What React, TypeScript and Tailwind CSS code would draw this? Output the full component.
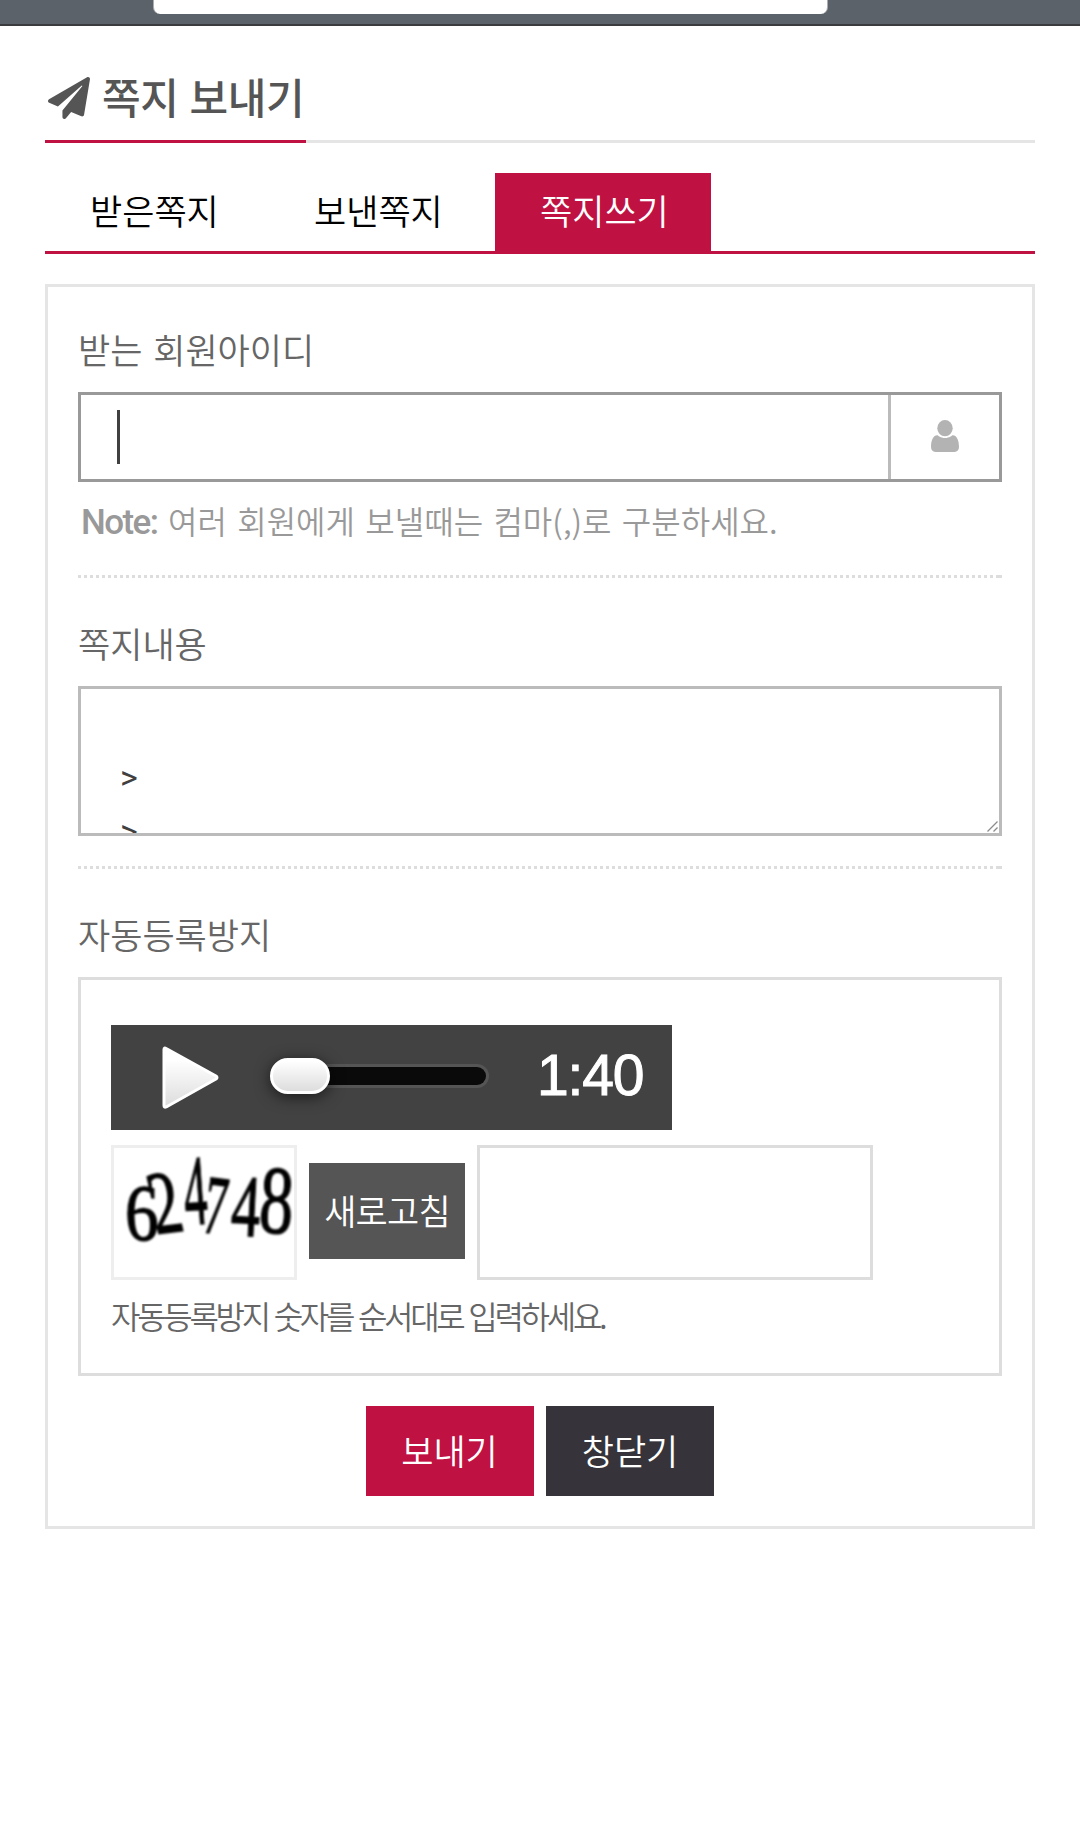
import React from 'react';
import { FaPaperPlane } from 'react-icons/fa';

const tabs = [
  { label: '받은쪽지', width: 'w-[217px]', pad: 'pl-[45px]', active: false },
  { label: '보낸쪽지', width: 'w-[233px]', pad: 'pl-[52px]', active: false },
  { label: '쪽지쓰기', width: 'w-[216px]', pad: 'pl-[45px]', active: true },
];

const captchaDigits = [
  { char: '6', transform: 'translate(11 91) rotate(3) skewX(3) scale(0.84 1)', size: 80 },
  { char: '2', transform: 'translate(42 86) rotate(-7) skewX(6) scale(0.68 1)', size: 90 },
  { char: '4', transform: 'translate(72 77) rotate(-4) scale(0.46 1)', size: 100 },
  { char: '7', transform: 'translate(87 84) rotate(7) scale(0.55 1)', size: 84 },
  { char: '4', transform: 'translate(116 87) rotate(3) scale(0.66 1)', size: 88 },
  { char: '8', transform: 'translate(144 84) rotate(3) scale(0.7 1)', size: 97 },
];

const UserIcon = () => (
  <svg width="28" height="32" viewBox="0 0 28 32" fill="#b3b3b3">
    <ellipse cx="14" cy="8.2" rx="7.7" ry="8.1" />
    <path d="M6.2 15.2C1.8 15.2 0 21 0 26.8C0 30 1.7 32 4.5 32H23.5C26.3 32 28 30 28 26.8C28 21 26.2 15.2 21.8 15.2C20.8 15.2 18.5 18 14 18C9.500 18 7.200 15.200 6.200 15.200Z" />
  </svg>
);

const PlayIcon = () => (
  <svg width="57" height="64" viewBox="0 0 57 64">
    <defs>
      <linearGradient id="play" x1="0" y1="0" x2="0" y2="1">
        <stop offset="0.2" stopColor="#ffffff" />
        <stop offset="1" stopColor="#dcdcdc" />
      </linearGradient>
    </defs>
    <path
      d="M2 3.500Q2 1.200 4.200 2.500L54 30Q56 31.500 54 33L4.200 61Q2 62 2 59.500Z"
      fill="url(#play)"
      stroke="#ffffff"
      strokeWidth="3"
      strokeLinejoin="round"
    />
  </svg>
);

const DottedLine = () => (
  <div className="flex h-[3px]">
    <div className="flex-1 bg-[repeating-linear-gradient(90deg,#dddddd_0px,#dddddd_3px,transparent_3px,transparent_6px)]" />
    <div className="w-[6px] bg-[#dddddd]" />
  </div>
);

const FieldLabel = ({ children }: { children: React.ReactNode }) => (
  <div className="h-[54px] text-[35px] leading-[52px] text-[#666666] whitespace-pre [word-spacing:3px]">{children}</div>
);

const AudioPlayer = () => (
  <div className="flex h-[105px] w-[561px] items-center bg-[#424242]">
    <div className="ml-[51px] mt-[1px]">
      <PlayIcon />
    </div>
    <div className="relative ml-[54px] mt-[-3px] h-[24px] w-[216px] rounded-full border-[3px] border-l-0 border-[#555555] bg-[#0a0a0a]">
      <div className="absolute -left-[3px] -top-[9px] h-[36px] w-[60px] rounded-[18px] border-[3px] border-white bg-linear-to-b from-white to-[#dddddd] shadow-[0_3px_15px_rgba(0,0,0,0.6)]" />
    </div>
    <div className="ml-[48px] mt-[-4px] font-['Liberation_Sans'] text-[57px] leading-none tracking-[-1.2px] text-white [-webkit-text-stroke:1px_white]">
      1:40
    </div>
  </div>
);

const Captcha = () => (
  <div className="h-[399px] border-[3px] border-[#dddddd] px-[30px] pt-[45px]">
    <AudioPlayer />
    <div className="mt-[15px] flex items-center gap-[12px]">
      <div className="h-[135px] w-[186px] border-[3px] border-[#eeeeee]">
        <svg width="180" height="129" viewBox="0 0 180 129" className="blur-[0.8px]">
          {captchaDigits.map((d, i) => (
            <text key={i} transform={d.transform} fontSize={d.size} fontFamily="Liberation Serif, serif" stroke="#000" strokeWidth="1.5">
              {d.char}
            </text>
          ))}
        </svg>
      </div>
      <button type="button" className="mt-[-3px] h-[96px] w-[156px] bg-[#555555] pb-[2px] text-[35px] tracking-[-0.8px] text-white">
        새로고침
      </button>
      <div className="h-[135px] w-[396px] border-[3px] border-[#dddddd]" />
    </div>
    <p className="mt-[9px] h-[54px] whitespace-nowrap text-[32px] leading-[52px] tracking-[-3.3px] text-[#666666] [word-spacing:2px]">
      자동등록방지 숫자를 순서대로 입력하세요.
    </p>
  </div>
);

const App = () => {
  return (
    <div className="min-h-[1845px] w-[1080px] bg-white font-['Noto_Sans_CJK_KR',sans-serif] font-[350]">
      <div className="flex h-[26px] border-b-2 border-[#393b3f] bg-[#5b6269] pl-[153px]">
        <div className="h-[14px] w-[675px] rounded-b-[7px] border-x border-[#a9adb0] bg-white" />
      </div>

      <div className="px-[45px]">
        <header className="flex h-[117px] border-b-[3px] border-[#e5e5e5]">
          <h1 className="flex h-[117px] w-[261px] items-center border-b-[3px] border-[#c01143] pl-[3px] text-[#555555]">
            <FaPaperPlane size={42} className="mt-[29px] shrink-0" />
            <span className="ml-[12px] mt-[26px] whitespace-nowrap text-[42px] font-medium leading-[60px] tracking-[-0.4px] [word-spacing:2px]">쪽지 보내기</span>
          </h1>
        </header>

        <nav className="mt-[30px] flex h-[81px] border-b-[3px] border-[#c01143]">
          {tabs.map((tab) => (
            <a
              key={tab.label}
              className={`${tab.width} ${tab.pad} h-[78px] whitespace-nowrap text-[35px] leading-[74px] ${
                tab.active ? 'bg-[#c01143] text-white' : 'text-black'
              }`}
            >
              {tab.label}
            </a>
          ))}
        </nav>

        <form className="mt-[30px] h-[1245px] border-[3px] border-[#e5e5e5] px-[30px]">
          <div className="pt-[36px]">
            <FieldLabel>받는 회원아이디</FieldLabel>
            <div className="mt-[15px] flex h-[90px] border-[3px] border-[#999999]">
              <div className="flex flex-1 items-center pl-[36px]">
                <div className="h-[54px] w-[3px] bg-[#404040]" />
              </div>
              <div className="flex w-[111px] items-center justify-center border-l-[3px] border-[#bbbbbb] pb-[2px]">
                <UserIcon />
              </div>
            </div>
            <p className="mb-[39px] mt-[12px] flex h-[42px] whitespace-nowrap pl-[3px] text-[32px] leading-[52px] text-[#999999]">
              <strong className="w-[87px] pt-[3px] font-['Roboto'] text-[35px] font-medium tracking-[-1.6px]">Note:</strong>
              <span className="[word-spacing:3.2px]">여러 회원에게 보낼때는 컴마(,)로 구분하세요.</span>
            </p>
            <DottedLine />
          </div>

          <div className="pt-[39px]">
            <FieldLabel>쪽지내용</FieldLabel>
            <div className="relative mt-[15px] h-[150px] overflow-hidden border-[3px] border-[#bbbbbb] pl-[39px] pt-[7px] font-['Roboto'] text-[34px] font-normal leading-[54px] text-[#404040]">
              <div className="h-[54px]" />
              <div>&gt;</div>
              <div>&gt;</div>
              <svg className="absolute bottom-[1px] right-[1px]" width="11" height="11" stroke="#8c8c8c" strokeWidth="1.3">
                <path d="M0.500 10.500L10.500 0.500M6.500 10.500L10.500 6.500" />
              </svg>
            </div>
            <div className="h-[30px]" />
            <DottedLine />
          </div>

          <div className="pt-[39px]">
            <FieldLabel>자동등록방지</FieldLabel>
            <div className="h-[15px]" />
            <Captcha />
          </div>

          <div className="mt-[30px] flex justify-center gap-[12px] text-[35px] text-white">
            <button type="button" className="h-[90px] w-[168px] bg-[#c01143] pb-[2px] pr-[1px]">보내기</button>
            <button type="button" className="h-[90px] w-[168px] bg-[#36343a] pb-[2px]">창닫기</button>
          </div>
        </form>
      </div>
    </div>
  );
};

export default App;
